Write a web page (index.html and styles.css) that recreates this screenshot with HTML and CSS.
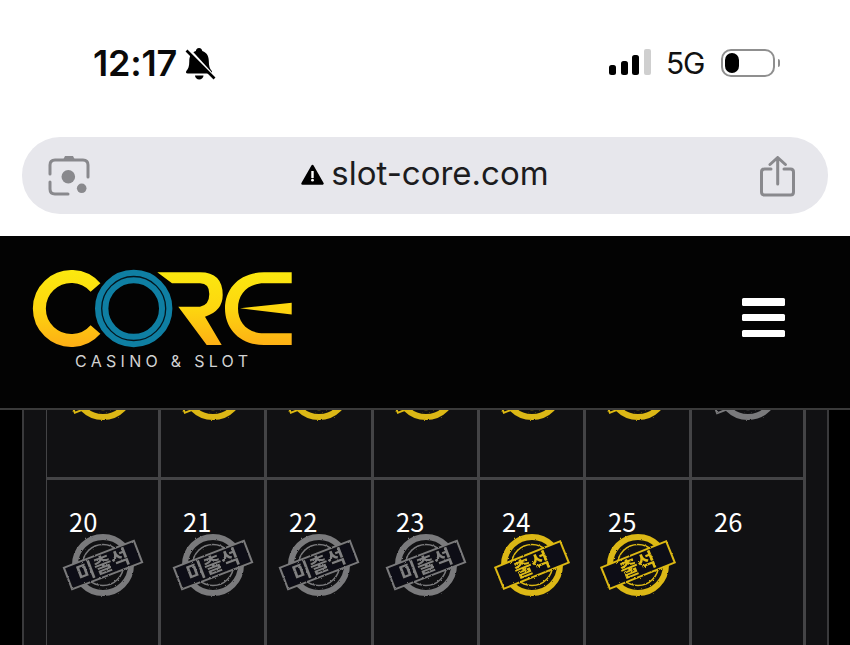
FILE: index.html
```html
<!DOCTYPE html>
<html lang="ko">
<head>
<meta charset="utf-8">
<title>CORE Casino &amp; Slot</title>
<link rel="stylesheet" href="styles.css">
</head>
<body>
<div class="browser">
  <div class="status">
    <div class="status-left">
      <span class="time">12:17</span>
      <svg class="bell" viewBox="186 46 32 33"><path class="bell-body" d="M201 47c-2 0-3 1.500-3.200 3-5 1.500-6.500 6-6.500 10 0 5-1 8-3 10q-1 2.500 1.500 2.500h22.500q2.500 0 1.500-2.500c-2-2-3-5-3-10 0-4-1.500-8.500-6.500-10-.2-1.500-1.200-3-3.300-3zM197 74.500h8.500a4.200 4 0 0 1-8.500 0z"/><path class="bell-halo" d="M190 47.500 216 76"/><path class="bell-slash" d="M188.500 49.500 216.500 77.500"/></svg>
    </div>
    <div class="status-right">
      <svg class="signal" viewBox="610 50 42 26"><rect x="0" y="16" width="7" height="10" rx="2.500" transform="translate(610 50)"/><rect x="12" y="12" width="7" height="14" rx="2.500" transform="translate(610 50)"/><rect x="23" y="6" width="7" height="20" rx="2.500" transform="translate(610 50)"/><rect class="signal-off" x="35" y="0" width="7" height="26" rx="2" transform="translate(610 50)"/></svg>
      <span class="network">5G</span>
      <div class="battery"><div class="battery-level"></div></div>
      <div class="battery-nub"></div>
    </div>
  </div>
  <div class="urlbar">
    <svg class="lens" viewBox="48 154 42 42"><path class="icon-line" d="M50 174v-9q0-5 5-5h28q5 0 5 5v12M50 182v7q0 5 5 5h13"/><path class="icon-fill" d="M62.500 161l2.500-5h8l2.500 5z"/><circle class="icon-fill" cx="68.300" cy="176.700" r="6.800"/><circle class="icon-fill" cx="81.700" cy="188.300" r="4.800"/></svg>
    <div class="address">
      <svg class="warn" viewBox="0 0 23 21"><path class="warn-tri" d="M11.500 2 21.500 19.500H1.500Z"/><rect class="warn-mark" x="10.300" y="7" width="2.400" height="7"/><circle class="warn-mark" cx="11.500" cy="16.200" r="1.400"/></svg>
      <span class="domain">slot-core.com</span>
    </div>
    <svg class="share" viewBox="760 155 36 41"><path class="icon-line" d="M771 168h-6.500q-3 0-3 3v20q0 3 3 3h26q3 0 3-3v-20q0-3-3-3h-6.500M777.700 183V157M770 163.500l7.700-7 7.700 7"/></svg>
  </div>
</div>

<header class="site-header">
  <svg class="logo" viewBox="30 267 264 101" role="img" aria-label="CORE Casino &amp; Slot">
    <defs>
      <linearGradient id="gold" gradientUnits="userSpaceOnUse" x1="0" y1="270" x2="0" y2="347">
        <stop offset="0" stop-color="#fbe90f"/>
        <stop offset=".5" stop-color="#fdd60f"/>
        <stop offset="1" stop-color="#fdae15"/>
      </linearGradient>
      <filter id="rough" x="-10%" y="-10%" width="120%" height="120%">
        <feTurbulence type="fractalNoise" baseFrequency=".45" numOctaves="2" seed="4"/>
        <feDisplacementMap in="SourceGraphic" scale="2.200"/>
      </filter>
    </defs>
    <path class="logo-c" d="M95.500 287.500A32 32 0 1 0 95.500 329.500"/>
    <path class="logo-gold" d="M157.300 272.300H200Q222.700 272.300 222.700 295Q222.700 311 205 316.700L221.700 345H206.700L178.300 306.700H200Q209.300 305 209.300 294Q209.300 283.300 200 283.300H172Z"/>
    <path class="logo-gold" d="M291.700 272.300H264C240 272.300 225 288 225 308.500C225 329 240 345 264 345H291.700V333.300H264C248 333.300 238 323 238 308.500C238 294 248 283.300 264 283.300H291.700ZM240 308.300 291.700 302.700V314.500Z"/>
    <circle class="logo-ring" cx="133.700" cy="308.500" r="32"/>
    <circle class="logo-ring-line" cx="133.700" cy="308.500" r="32"/>
    <text class="logo-tag" x="75" y="367" textLength="173">CASINO &amp; SLOT</text>
  </svg>
  <div class="menu-btn"><span></span><span></span><span></span></div>
</header>

<main class="page">
  <section class="panel">
    <div class="calendar">
      <div class="day"><span class="num">13</span><svg class="stamp done" viewBox="-42 -34 84 68"><circle class="ring-o" r="28"/><circle class="ring-i" r="20.500"/><g transform="rotate(-22)"><rect class="band" x="-35" y="-11.500" width="70" height="23"/><text class="label" y="7">출석</text></g></svg></div>
      <div class="day"><span class="num">14</span><svg class="stamp done" viewBox="-42 -34 84 68"><circle class="ring-o" r="28"/><circle class="ring-i" r="20.500"/><g transform="rotate(-22)"><rect class="band" x="-35" y="-11.500" width="70" height="23"/><text class="label" y="7">출석</text></g></svg></div>
      <div class="day"><span class="num">15</span><svg class="stamp done" viewBox="-42 -34 84 68"><circle class="ring-o" r="28"/><circle class="ring-i" r="20.500"/><g transform="rotate(-22)"><rect class="band" x="-35" y="-11.500" width="70" height="23"/><text class="label" y="7">출석</text></g></svg></div>
      <div class="day"><span class="num">16</span><svg class="stamp done" viewBox="-42 -34 84 68"><circle class="ring-o" r="28"/><circle class="ring-i" r="20.500"/><g transform="rotate(-22)"><rect class="band" x="-35" y="-11.500" width="70" height="23"/><text class="label" y="7">출석</text></g></svg></div>
      <div class="day"><span class="num">17</span><svg class="stamp done" viewBox="-42 -34 84 68"><circle class="ring-o" r="28"/><circle class="ring-i" r="20.500"/><g transform="rotate(-22)"><rect class="band" x="-35" y="-11.500" width="70" height="23"/><text class="label" y="7">출석</text></g></svg></div>
      <div class="day"><span class="num">18</span><svg class="stamp done" viewBox="-42 -34 84 68"><circle class="ring-o" r="28"/><circle class="ring-i" r="20.500"/><g transform="rotate(-22)"><rect class="band" x="-35" y="-11.500" width="70" height="23"/><text class="label" y="7">출석</text></g></svg></div>
      <div class="day"><span class="num">19</span><svg class="stamp miss" viewBox="-42 -34 84 68"><circle class="ring-o" r="28"/><circle class="ring-i" r="20.500"/><g transform="rotate(-21)"><rect class="band" x="-37.500" y="-11.500" width="75" height="23"/><text class="label" y="7">미출석</text></g></svg></div>

      <div class="day"><span class="num">20</span><svg class="stamp miss" viewBox="-42 -34 84 68"><circle class="ring-o" r="28"/><circle class="ring-i" r="20.500"/><g transform="rotate(-21)"><rect class="band" x="-37.500" y="-11.500" width="75" height="23"/><text class="label" y="7">미출석</text></g></svg></div>
      <div class="day"><span class="num">21</span><svg class="stamp miss" viewBox="-42 -34 84 68"><circle class="ring-o" r="28"/><circle class="ring-i" r="20.500"/><g transform="rotate(-21)"><rect class="band" x="-37.500" y="-11.500" width="75" height="23"/><text class="label" y="7">미출석</text></g></svg></div>
      <div class="day"><span class="num">22</span><svg class="stamp miss" viewBox="-42 -34 84 68"><circle class="ring-o" r="28"/><circle class="ring-i" r="20.500"/><g transform="rotate(-21)"><rect class="band" x="-37.500" y="-11.500" width="75" height="23"/><text class="label" y="7">미출석</text></g></svg></div>
      <div class="day"><span class="num">23</span><svg class="stamp miss" viewBox="-42 -34 84 68"><circle class="ring-o" r="28"/><circle class="ring-i" r="20.500"/><g transform="rotate(-21)"><rect class="band" x="-37.500" y="-11.500" width="75" height="23"/><text class="label" y="7">미출석</text></g></svg></div>
      <div class="day"><span class="num">24</span><svg class="stamp done" viewBox="-42 -34 84 68"><circle class="ring-o" r="28"/><circle class="ring-i" r="20.500"/><g transform="rotate(-22)"><rect class="band" x="-35" y="-11.500" width="70" height="23"/><text class="label" y="7">출석</text></g></svg></div>
      <div class="day"><span class="num">25</span><svg class="stamp done" viewBox="-42 -34 84 68"><circle class="ring-o" r="28"/><circle class="ring-i" r="20.500"/><g transform="rotate(-22)"><rect class="band" x="-35" y="-11.500" width="70" height="23"/><text class="label" y="7">출석</text></g></svg></div>
      <div class="day"><span class="num">26</span></div>
    </div>
  </section>
</main>
</body>
</html>
```
FILE: styles.css
```css
* { box-sizing: border-box; }
html, body { margin: 0; height: 100%; }
body {
  width: 850px;
  height: 645px;
  overflow: hidden;
  display: flex;
  flex-direction: column;
  background: #000;
  font-family: "Inter", "Liberation Sans", sans-serif;
}

/* browser chrome */
.browser {
  flex: none;
  height: 236px;
  background: #fff;
  padding: 40px 22px 0;
}
.status {
  height: 46px;
  margin: 0 48px 51px 71px;
  display: flex;
  align-items: center;
  justify-content: space-between;
}
.status-left { display: flex; align-items: center; gap: 7px; }
.time { font-size: 36px; font-weight: 600; line-height: 46px; color: #0a0a0a; letter-spacing: -.2px; }
.bell { width: 32px; height: 33px; }
.bell-body { fill: #000; }
.bell-halo { fill: none; stroke: #fff; stroke-width: 3; }
.bell-slash { fill: none; stroke: #000; stroke-width: 2.600; }
.status-right { display: flex; align-items: center; }
.signal { width: 42px; height: 26px; fill: #000; margin-right: 15px; margin-top: -2px; }
.signal-off { fill: #cfcfcf; }
.network { font-size: 30px; letter-spacing: -1px; line-height: 46px; color: #111; margin-right: 16px; }
.battery {
  width: 54px;
  height: 28px;
  margin-top: -1px;
  border: 2px solid #8f8f8f;
  border-radius: 10px;
  padding: 2px;
}
.battery-level { width: 14px; height: 100%; background: #000; border-radius: 7px; }
.battery-nub {
  width: 2.500px;
  height: 8px;
  margin: -1px 0 0 3px;
  background: #8f8f8f;
  border-radius: 0 4px 4px 0;
}

.urlbar {
  height: 77px;
  border-radius: 38px;
  background: #e7e7ec;
  padding: 0 32px 0 26px;
  display: flex;
  align-items: center;
  justify-content: space-between;
}
.lens { width: 42px; height: 42px; margin-bottom: 2px; }
.share { width: 36px; height: 41px; margin-top: 2px; }
.icon-line { fill: none; stroke: #89898d; stroke-width: 3; stroke-linecap: round; stroke-linejoin: round; }
.icon-fill { fill: #89898d; }
.address { display: flex; align-items: center; gap: 7px; padding-bottom: 6px; }
.warn { width: 23px; height: 21px; margin-top: 3px; }
.warn-tri { fill: #000; stroke: #000; stroke-width: 2.500; stroke-linejoin: round; }
.warn-mark { fill: #fff; }
.domain { font-size: 33px; line-height: 46px; color: #1c1c1e; }

/* site header */
.site-header {
  flex: none;
  height: 174px;
  background: #030303;
  border-bottom: 2px solid #3a3a3a;
  padding: 0 65px 9px 30px;
  display: flex;
  align-items: center;
  justify-content: space-between;
}
.logo { width: 264px; height: 101px; }
.logo-c { fill: none; stroke: url(#gold); stroke-width: 13; }
.logo-gold { fill: url(#gold); }
.logo-ring { fill: none; stroke: #0f7fa3; stroke-width: 13.400; }
.logo-ring-line { fill: none; stroke: #04161f; stroke-width: 1.300; }
.logo-tag { fill: #d2d2d2; font-size: 16px; font-family: "Inter", sans-serif; }
.menu-btn { width: 43px; height: 39px; display: flex; flex-direction: column; justify-content: space-between; }
.menu-btn span { display: block; height: 7.500px; border-radius: 1.500px; background: #fff; }

/* attendance calendar */
.page {
  flex: 1;
  min-height: 0;
  overflow: hidden;
  padding: 0 21.500px 0 22px;
  background: #000;
}
.panel {
  display: flow-root;
  height: 100%;
  background: #111113;
  border-left: 2px solid #3a3a3c;
  border-right: 2px solid #3a3a3c;
  padding: 0 21px 0 22px;
}
.calendar {
  display: grid;
  grid-template-columns: 111px 103px 104px 103px 103px 103px 111px;
  grid-auto-rows: 173px;
  gap: 3px;
  margin-top: -106px;
  padding: 0 2px 0 1px;
  background: #444446;
}
.day { background: #111113; padding-top: 31px; }
.num {
  display: block;
  padding-left: 22px;
  font-family: "Noto Sans CJK KR", sans-serif;
  font-size: 25.500px;
  line-height: 20px;
  color: #fff;
}
.stamp { display: block; width: 84px; height: 68px; margin: 0 auto; overflow: visible; filter: url(#rough); }
.ring-o { fill: none; stroke-width: 6; }
.ring-i { fill: none; stroke-width: 1.600; }
.band { fill: #111113; stroke-width: 2; }
.label {
  font-family: "Noto Sans CJK KR", sans-serif;
  font-weight: 700;
  font-size: 20px;
  text-anchor: middle;
}
.done .ring-o, .done .ring-i, .done .band { stroke: #dcb812; }
.done .label { fill: #e0bc14; }
.miss .ring-o, .miss .ring-i, .miss .band { stroke: #7a7a7c; }
.miss .label { fill: #808082; }
```
